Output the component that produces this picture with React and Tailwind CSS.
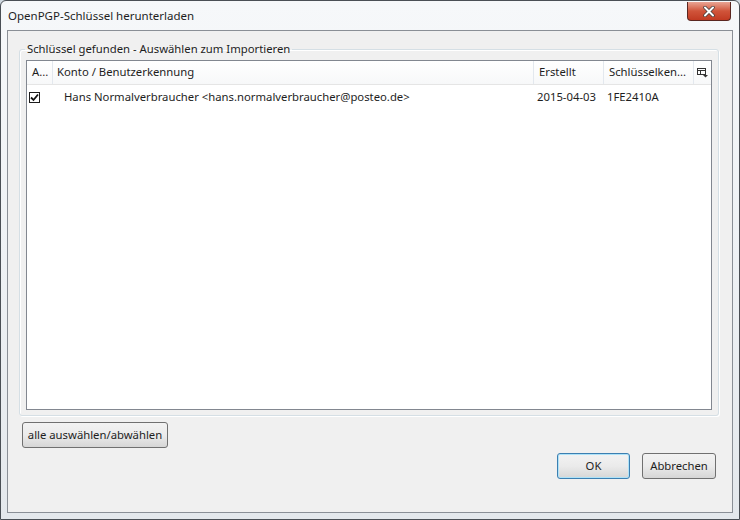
import React from "react";

const font = { fontFamily: '"Noto Sans", "Open Sans", sans-serif' };

function Btn({ children, className = "", focused = false }) {
  return (
    <button
      className={`h-[26px] rounded-[3px] border text-[11.3px] text-[#1e1e1e] bg-gradient-to-b from-[#f2f2f2] via-[#ebebeb] to-[#d6d6d6] ${
        focused ? "border-[#3c7fb1] shadow-[inset_0_0_0_1px_#aee2f8]" : "border-[#707070]"
      } ${className}`}
    >
      {children}
    </button>
  );
}

export default function App() {
  return (
    <div style={font} className="w-[740px] h-[520px] bg-[#cfd8e0] text-[#1e1e1e] overflow-hidden">
      <div className="w-full h-full flex flex-col rounded-t-[6px] border border-[#4a4f55] bg-gradient-to-b from-[#f6f8fa] via-[#eef1f4] to-[#e4e8ec] px-[6px] pb-[6px]">
        {/* Titelleiste */}
        <div className="h-[29px] flex items-start justify-between">
          <span className="text-[11.5px] pt-[6px] pl-[1px]">OpenPGP-Schlüssel herunterladen</span>
          <div className="mt-[1px] mr-[2px] w-[44px] h-[19px] rounded-b-[4px] border border-[#5a2620] border-t-0 bg-gradient-to-b from-[#e8a493] via-[#d0543a] to-[#c13a22] flex items-center justify-center">
            <svg width="12" height="11" viewBox="0 0 12 11">
              <path d="M2 1.5 L10 9.5 M10 1.5 L2 9.5" stroke="#3a3a3a" strokeWidth="3.4" strokeLinecap="round" />
              <path d="M2 1.5 L10 9.5 M10 1.5 L2 9.5" stroke="#ffffff" strokeWidth="2" strokeLinecap="round" />
            </svg>
          </div>
        </div>

        {/* Client-Bereich */}
        <div className="flex-1 flex flex-col border border-[#8a8f96] bg-[#f0f0f0] pl-[11px] pr-[13px] pt-[11px] pb-[10px]">
          <fieldset className="border border-[#d5dfe5] rounded-[3px] pl-[6px] pr-[6px] pb-[5px] pt-[4px] shadow-[inset_1px_1px_0_#fff,1px_1px_0_#fff]">
            <legend className="text-[11.3px] px-[2px] ml-[-1px] leading-[14px]">
              Schlüssel gefunden - Auswählen zum Importieren
            </legend>
            <div className="h-[350px] border border-[#828790] bg-white flex flex-col">
              <div className="h-[24px] flex items-stretch text-[11.3px] border-b border-[#e5e5e5] bg-gradient-to-b from-white to-[#f7f8f9]">
                <div className="w-[26px] pl-[5px] flex items-center border-r border-[#e3e8ee]">A...</div>
                <div className="w-[481px] pl-[4px] flex items-center border-r border-[#e3e8ee]">Konto / Benutzerkennung</div>
                <div className="w-[70px] pl-[5px] flex items-center border-r border-[#e3e8ee]">Erstellt</div>
                <div className="w-[90px] pl-[5px] flex items-center border-r border-[#e3e8ee]">Schlüsselken...</div>
                <div className="flex-1 flex items-center justify-center">
                  <svg width="11" height="10" viewBox="0 0 11 10">
                    <rect x="0.5" y="0.5" width="8" height="6" fill="none" stroke="#333" />
                    <path d="M0.5 2.5 H8.5 M3.5 2.5 V6.5" stroke="#333" />
                    <path d="M6 7 H11 L8.5 9.5 Z" fill="#333" />
                  </svg>
                </div>
              </div>
              <div className="h-[23px] flex items-center text-[11.3px] pt-[1px]">
                <div className="w-[26px] pl-[2px] flex items-center">
                  <div className="w-[11px] h-[11px] border border-[#1c1c1c] bg-white flex items-center justify-center">
                    <svg width="9" height="9" viewBox="0 0 9 9">
                      <path d="M1 4.5 L3.5 7 L8 1.5" fill="none" stroke="#111" strokeWidth="1.8" />
                    </svg>
                  </div>
                </div>
                <div className="w-[481px] pl-[11px]">
                  Hans Normalverbraucher &lt;hans.normalverbraucher@posteo.de&gt;
                </div>
                <div className="w-[70px] pl-[3px]">2015-04-03</div>
                <div className="w-[90px] pl-[3px]">1FE2410A</div>
              </div>
            </div>
          </fieldset>

          <div className="mt-[5px]">
            <Btn className="w-[146px] ml-[3px]">alle auswählen/abwählen</Btn>
          </div>

          <div className="mt-[5px] flex justify-end gap-[12px] pr-[3px]">
            <Btn focused className="w-[73px]">OK</Btn>
            <Btn className="w-[74px]">Abbrechen</Btn>
          </div>
        </div>
      </div>
    </div>
  );
}
